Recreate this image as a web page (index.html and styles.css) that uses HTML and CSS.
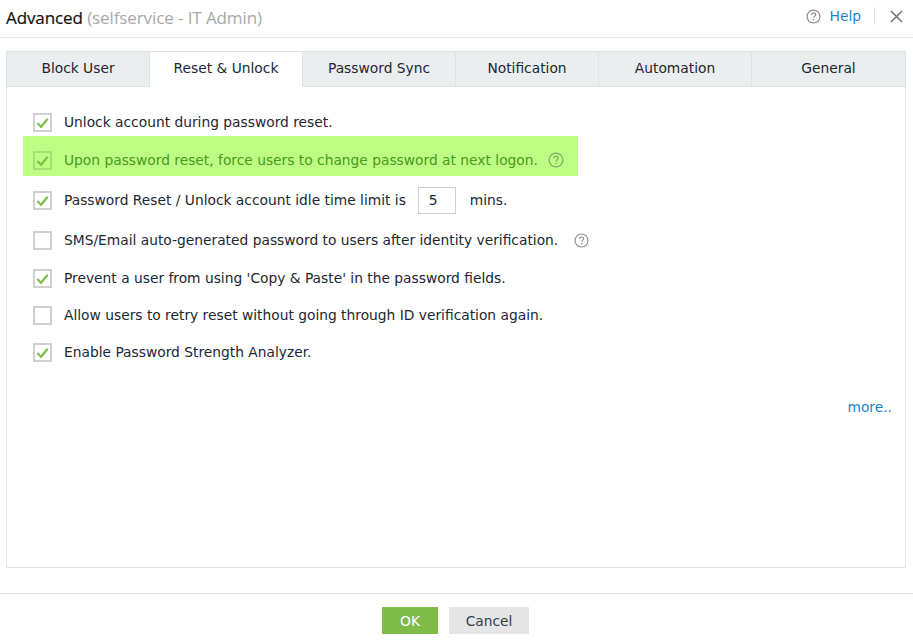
FILE: index.html
```html
<!DOCTYPE html>
<html lang="en">
<head>
<meta charset="utf-8">
<title>Advanced</title>
<link rel="stylesheet" href="styles.css">
</head>
<body>
<div class="dialog">
  <header class="head">
    <h1 class="title">Advanced <span class="sub">(selfservice - IT Admin)</span></h1>
    <div class="head-tools">
      <svg class="help-ic" viewBox="0 0 16 16"><circle cx="8" cy="8" r="6.9"/><path d="M5.9 6.3c0-1.3 1-2.1 2.2-2.1s2.1.8 2.1 1.9c0 1.6-2.1 1.6-2.1 3.3"/><circle class="dot" cx="8.1" cy="11.5" r=".8"/></svg>
      <a class="help">Help</a>
      <span class="sep"></span>
      <svg class="close" viewBox="0 0 14 14"><path d="M1 1l12 12M13 1L1 13"/></svg>
    </div>
  </header>
  <section class="panel">
    <nav class="tabs">
      <div class="tab t1">Block User</div>
      <div class="tab t2 active">Reset &amp; Unlock</div>
      <div class="tab t2">Password Sync</div>
      <div class="tab t1">Notification</div>
      <div class="tab t2">Automation</div>
      <div class="tab t3">General</div>
    </nav>
    <div class="body">
      <div class="row r1"><span class="cb on"><svg viewBox="0 0 16 16"><path d="M2.5 8.5l4 4 7-8.5"/></svg></span><span>Unlock account during password reset.</span></div>
      <div class="row r2 hl"><span class="cb on"><svg viewBox="0 0 16 16"><path d="M2.5 8.5l4 4 7-8.5"/></svg></span><span>Upon password reset, force users to change password at next logon.</span>
        <svg class="q" viewBox="0 0 16 16"><circle cx="8" cy="8" r="6.9"/><path d="M5.9 6.3c0-1.3 1-2.1 2.2-2.1s2.1.8 2.1 1.9c0 1.6-2.1 1.6-2.1 3.3"/><circle class="dot" cx="8.1" cy="11.5" r=".8"/></svg></div>
      <div class="row r3"><span class="cb on"><svg viewBox="0 0 16 16"><path d="M2.5 8.5l4 4 7-8.5"/></svg></span><span>Password Reset / Unlock account idle time limit is</span><span class="num">5</span><span class="mins">mins.</span></div>
      <div class="row r4"><span class="cb"></span><span>SMS/Email auto-generated password to users after identity verification.</span>
        <svg class="q q2" viewBox="0 0 16 16"><circle cx="8" cy="8" r="6.9"/><path d="M5.9 6.3c0-1.3 1-2.1 2.2-2.1s2.1.8 2.1 1.9c0 1.6-2.1 1.6-2.1 3.3"/><circle class="dot" cx="8.1" cy="11.5" r=".8"/></svg></div>
      <div class="row r5"><span class="cb on"><svg viewBox="0 0 16 16"><path d="M2.5 8.5l4 4 7-8.5"/></svg></span><span>Prevent a user from using 'Copy &amp; Paste' in the password fields.</span></div>
      <div class="row r6"><span class="cb"></span><span>Allow users to retry reset without going through ID verification again.</span></div>
      <div class="row r7"><span class="cb on"><svg viewBox="0 0 16 16"><path d="M2.5 8.5l4 4 7-8.5"/></svg></span><span>Enable Password Strength Analyzer.</span></div>
      <div class="more"><a>more..</a></div>
    </div>
  </section>
  <footer class="foot">
    <button class="btn ok">OK</button>
    <button class="btn cancel">Cancel</button>
  </footer>
</div>
</body>
</html>
```

FILE: styles.css
```css
* { box-sizing: border-box; }
html, body { margin: 0; padding: 0; background: #fff; }
body { width: 913px; height: 643px; overflow: hidden; font-family: "DejaVu Sans", Verdana, sans-serif; font-size: 13.8px; color: #1c2733; }
.dialog { display: flex; flex-direction: column; height: 643px; }
.head { height: 38px; border-bottom: 1px solid #e6e6e6; display: flex; align-items: flex-start; justify-content: space-between; padding: 6px 10px 0 6px; }
.title { margin: 0; font: 400 17px/24px "Open Sans", sans-serif; color: #111; letter-spacing: -.1px; -webkit-text-stroke: .2px #111; }
.sub { color: #a5a8ab; -webkit-text-stroke: 0; }
.head-tools { display: flex; align-items: center; height: 18px; margin-top: 1px; }
.help-ic { width: 15px; height: 15px; fill: none; stroke: #8e8e8e; stroke-width: 1.3; }
.help-ic .dot, .q .dot { fill: #8e8e8e; stroke: none; }
.help { color: #1a86c8; margin-left: 9px; }
.sep { width: 1px; height: 18px; background: #e2e2e2; margin: 0 15px 0 13px; }
.close { width: 13px; height: 13px; fill: none; stroke: #6f6f6f; stroke-width: 1.6; }
.panel { margin: 13px 7px 0 6px; height: 517px; border: 1px solid #e2e2e2; display: flex; flex-direction: column; }
.tabs { display: flex; height: 35px; flex: none; background: #ebeeef; border-bottom: 1px solid #e2e2e2; }
.tab { height: 34px; display: flex; align-items: center; justify-content: center; border-right: 1px solid #e2e2e2; color: #1c2733; padding-bottom: 3px; }
.t1 { width: 143px; }
.t2 { width: 153px; }
.t3 { flex: 1; border-right: 0; }
.tab.active { background: #fff; height: 35px; padding-bottom: 4px; }
.body { flex: 1; position: relative; padding: 0 0 0 16px; }
.row { display: flex; align-items: center; height: 28px; }
.r1 { margin-top: 21px; }
.r2 { height: 40px; padding-top: 8px; width: 555px; background: #bdfd83; color: #4b9a1c; }
.r3 { margin-top: 9px; height: 30px; }
.r4 { margin-top: 11px; }
.r5 { margin-top: 10px; }
.r6 { margin-top: 9px; }
.r7 { margin-top: 9px; }
.cb { flex: none; width: 19px; height: 19px; margin: 0 12px 0 10px; border: 2px solid #cfd1d1; background: #fff; display: flex; align-items: center; justify-content: center; }
.cb svg { width: 15px; height: 15px; fill: none; stroke: #7fbe4d; stroke-width: 2.4; }
.hl .cb { background: transparent; border-color: #a6de73; }
.hl .cb svg { stroke: #7cc247; }
.q { width: 16px; height: 16px; margin-left: 10px; fill: none; stroke: #7fa865; stroke-width: 1.2; }
.q .dot { fill: #7fa865; }
.q2 { width: 15px; height: 15px; margin-left: 16px; stroke: #8e8e8e; }
.q2 .dot { fill: #8e8e8e; }
.num { width: 38px; height: 27px; border: 1px solid #cfd1d1; margin-left: 12px; padding-left: 10px; line-height: 25px; }
.mins { margin-left: 14px; }
.more { position: absolute; right: 13px; top: 312px; color: #1a86c8; }
.foot { margin-top: 25px; border-top: 1px solid #e6e6e6; display: flex; justify-content: center; gap: 11px; padding: 13px 2px 0 0; }
.btn { height: 27px; border: 0; font: 13.8px "DejaVu Sans", sans-serif; padding: 0; }
.ok { width: 56px; background: #7fbb48; color: #fff; }
.cancel { width: 80px; background: #e5e5e5; color: #333f4d; }
```
